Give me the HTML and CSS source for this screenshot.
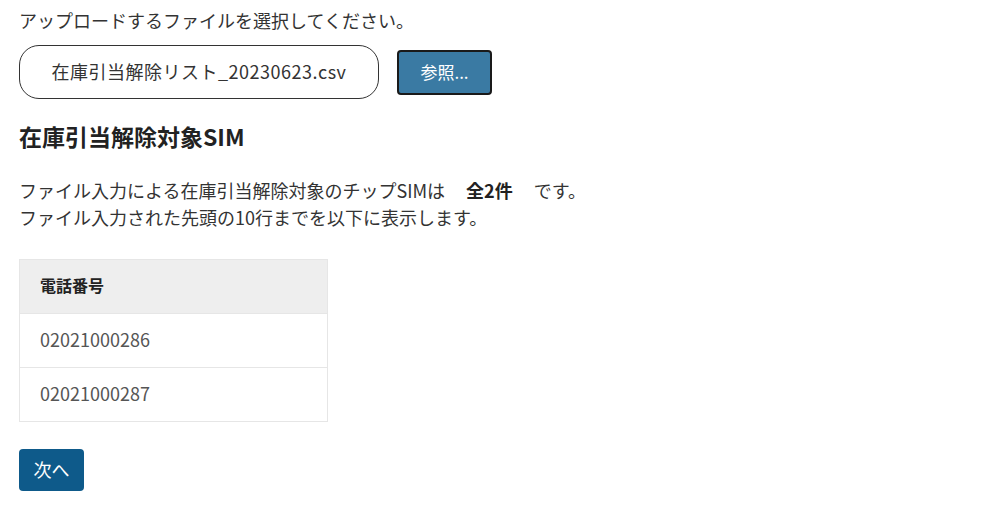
FILE: index.html
```html
<!DOCTYPE html>
<html lang="ja">
<head>
<meta charset="utf-8">
<link rel="stylesheet" href="styles.css">
</head>
<body>
<div class="page">
  <p class="lead">アップロードするファイルを選択してください。</p>
  <div class="file-row">
    <div class="file-box">在庫引当解除リスト_20230623.csv</div>
    <button class="browse">参照...</button>
  </div>
  <h2 class="title">在庫引当解除対象SIM</h2>
  <p class="desc">ファイル入力による在庫引当解除対象のチップSIMは<strong class="count">全2件</strong>です。<br>ファイル入力された先頭の10行までを以下に表示します。</p>
  <table class="list">
    <thead><tr><th>電話番号</th></tr></thead>
    <tbody>
      <tr><td>02021000286</td></tr>
      <tr><td>02021000287</td></tr>
    </tbody>
  </table>
  <button class="next">次へ</button>
</div>
</body>
</html>
```
FILE: styles.css
```css
html, body { margin: 0; padding: 0; background: #fff; }
body { font-family: "Noto Sans CJK JP", "Noto Sans", sans-serif; color: #333; font-size: 18px; }
.page { padding: 8px 19px; }
.lead { margin: 0; line-height: 24px; }
.file-row { display: flex; align-items: center; margin-top: 13px; }
.file-box { box-sizing: border-box; width: 360px; height: 54px; padding-bottom: 3px; border: 1px solid #333; border-radius: 20px; display: flex; align-items: center; justify-content: center; font-size: 18px; letter-spacing: 0.5px; color: #333; }
.browse { box-sizing: border-box; margin-left: 18px; width: 95px; height: 45px; padding: 0 0 2px; background: #3a7aa3; color: #fff; border: 2px solid #1a1a1a; border-radius: 4px; font-family: inherit; font-size: 17px; }
.title { margin: 23px 0 0; font-size: 23px; line-height: 28px; font-weight: bold; color: #222; }
.desc { margin: 27px 0 0; line-height: 27px; }
.count { margin: 0 21px 0 21px; font-weight: bold; color: #222; }
.list { margin-top: 28px; border-collapse: collapse; width: 309px; }
.list th, .list td { border: 1px solid #e6e6e6; height: 54px; padding: 0 0 4px 20px; text-align: left; box-sizing: border-box; }
.list th { background: #eee; font-size: 16px; font-weight: bold; color: #222; }
.list td { color: #555; font-size: 18px; }
.next { display: block; margin-top: 27px; box-sizing: border-box; width: 65px; height: 42px; padding: 0 0 3px; background: #0e5a8a; color: #fff; border: none; border-radius: 4px; font-family: inherit; font-size: 18px; }
```
